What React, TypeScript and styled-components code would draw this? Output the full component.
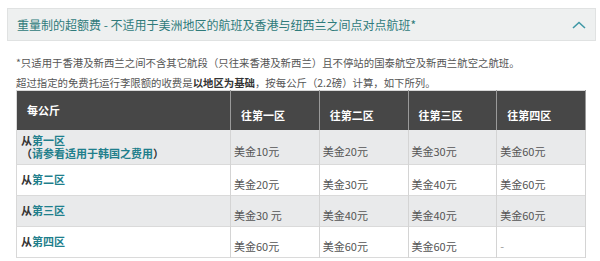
import React from "react";
import styled, { createGlobalStyle } from "styled-components";

const GlobalStyle = createGlobalStyle`
  body {
    margin: 0;
    background: #ffffff;
    font-family: "Noto Sans CJK SC", "Noto Sans", sans-serif;
  }
`;

const Page = styled.div`
  padding: 8px 4px 0 7px;
`;

const PanelHeader = styled.div`
  display: flex;
  align-items: center;
  justify-content: space-between;
  box-sizing: border-box;
  height: 33px;
  padding: 0 9px;
  background: #eef0f0;
  border: 1px solid #e0e2e2;
`;

const PanelTitle = styled.h2`
  margin: 0;
  font-size: 12px;
  font-weight: normal;
  color: #2f7b7b;
`;

const PanelBody = styled.div`
  padding: 15px 10px 0 9px;
`;

const Note = styled.p<{ $gap?: number }>`
  margin: 0 0 ${(p) => p.$gap ?? 0}px;
  font-size: 10.4px;
  line-height: 14px;
  color: #555;

  b {
    color: #333;
  }
`;

const FeeTable = styled.table`
  width: 570px;
  border-collapse: collapse;
  table-layout: fixed;
  font-size: 11px;
  line-height: 13px;
  border: 1px solid #d8d8d8;
`;

const HeadCell = styled.th<{ $first?: boolean }>`
  height: 39px;
  box-sizing: border-box;
  padding: ${(p) => (p.$first ? "0 10px" : "11px 10px 0")};
  background: #474747;
  color: #fff;
  font-weight: bold;
  text-align: left;
  vertical-align: middle;
  border-right: 1px solid #9a9a9a;
`;

const Row = styled.tr<{ $shade?: boolean }>`
  height: 29px;
  background: ${(p) => (p.$shade ? "#e9eaeb" : "#ffffff")};
  border-bottom: 1px solid #dadada;
`;

const ZoneCell = styled.td`
  padding: 4px 4px;
  vertical-align: middle;
  font-weight: bold;
  color: #333;
  border-right: 1px solid #d4d4d4;
`;

const ZoneLink = styled.span`
  color: #1f7f8c;
`;

const PriceCell = styled.td<{ $muted?: boolean }>`
  padding: 13px 3px 4px;
  vertical-align: middle;
  color: ${(p) => (p.$muted ? "#999" : "#555")};
  border-right: 1px solid #d4d4d4;
`;

const Chevron = () => (
  <svg width="14" height="8" viewBox="0 0 14 8">
    <polyline
      points="1,7 7,1.5 13,7"
      fill="none"
      stroke="#3f98a6"
      strokeWidth="1.6"
    />
  </svg>
);

const zones = ["往第一区", "往第二区", "往第三区", "往第四区"];

const rows = [
  { from: "第一区", note: "请参看适用于韩国之费用", prices: ["美金10元", "美金20元", "美金30元", "美金60元"] },
  { from: "第二区", prices: ["美金20元", "美金30元", "美金40元", "美金60元"] },
  { from: "第三区", prices: ["美金30 元", "美金40元", "美金40元", "美金60元"] },
  { from: "第四区", prices: ["美金60元", "美金60元", "美金60元", "-"] },
];

const App = () => (
  <Page>
    <GlobalStyle />
    <PanelHeader>
      <PanelTitle>重量制的超额费 - 不适用于美洲地区的航班及香港与纽西兰之间点对点航班*</PanelTitle>
      <Chevron />
    </PanelHeader>
    <PanelBody>
      <Note $gap={6}>*只适用于香港及新西兰之间不含其它航段（只往来香港及新西兰）且不停站的国泰航空及新西兰航空之航班。</Note>
      <Note>
        超过指定的免费托运行李限额的收费是<b>以地区为基础</b>，按每公斤（2.2磅）计算，如下所列。
      </Note>
      <FeeTable>
        <colgroup>
          <col style={{ width: 214 }} />
          <col />
          <col />
          <col />
          <col />
        </colgroup>
        <thead>
          <tr>
            <HeadCell $first>每公斤</HeadCell>
            {zones.map((z) => (
              <HeadCell key={z}>{z}</HeadCell>
            ))}
          </tr>
        </thead>
        <tbody>
          {rows.map((r, i) => (
            <Row key={r.from} $shade={i % 2 === 0}>
              <ZoneCell>
                从<ZoneLink>{r.from}</ZoneLink>
                {r.note && (
                  <>
                    <br />（<ZoneLink>{r.note}</ZoneLink>）
                  </>
                )}
              </ZoneCell>
              {r.prices.map((p, j) => (
                <PriceCell key={j} $muted={p === "-"}>
                  {p}
                </PriceCell>
              ))}
            </Row>
          ))}
        </tbody>
      </FeeTable>
    </PanelBody>
  </Page>
);

export default App;
